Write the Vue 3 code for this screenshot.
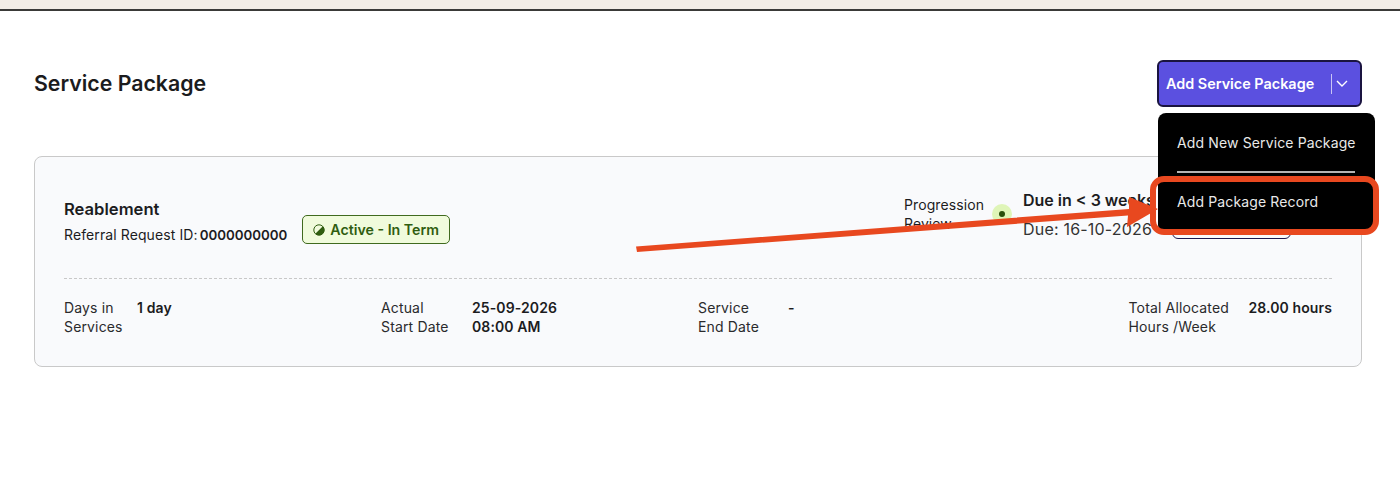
<template>
  <div class="page">
    <div class="topbar"></div>
    <main class="content">
      <header class="head">
        <h1 class="title">Service Package</h1>
        <div class="action">
          <button class="add" type="button">
            <span>Add Service Package</span>
            <span class="sep"></span>
            <svg class="chev" viewBox="0 0 12 7" width="12" height="7" fill="none" stroke="#fff" stroke-width="1.4"><path d="M1 1l5 5 5-5" /></svg>
          </button>
          <div class="menu">
            <div class="item first">Add New Service Package</div>
            <div class="rule"></div>
            <div class="item second">Add Package Record</div>
          </div>
        </div>
      </header>

      <section class="card">
        <div class="upper">
          <div class="id">
            <div class="idtext">
              <div class="name">Reablement</div>
              <div class="ref">Referral Request ID:<b>0000000000</b></div>
            </div>
            <span class="badge">
              <svg viewBox="0 0 12 12" width="12" height="12"><circle cx="6" cy="6" r="5.200" fill="none" stroke="#2f5d10" stroke-width="1" /><path d="M9.800 2.300A5.300 5.300 0 0 1 2.300 9.800z" fill="#2f5d10" /></svg>
              Active - In Term
            </span>
          </div>
          <div class="review">
            <div class="rlabel">Progression Review</div>
            <span class="halo"><i></i></span>
            <div class="due">
              <div class="dueb">Due in &lt; 3 weeks</div>
              <div class="dued">Due: 16-10-2026</div>
            </div>
            <div class="ghost"></div>
          </div>
        </div>
        <div class="facts">
          <div v-for="f in facts" :key="f.a" class="fact" :style="{ gridTemplateColumns: f.w + 'px auto' }">
            <div class="flabel">{{ f.a }}<br />{{ f.b }}</div>
            <div class="fval">{{ f.v }}<br v-if="f.v2" />{{ f.v2 }}</div>
          </div>
        </div>
      </section>
    </main>

    <svg class="arrow" width="1400" height="496" viewBox="0 0 1400 496">
      <path d="M636 246.500L1129 209L1129 197L1158 209L1127 227L1128 215.500L637 252z" fill="#e8481f" />
    </svg>
    <div class="frame"></div>
  </div>
</template>

<script setup>
const facts = [
  { a: 'Days in', b: 'Services', v: '1 day', v2: '', w: 73 },
  { a: 'Actual', b: 'Start Date', v: '25-09-2026', v2: '08:00 AM', w: 91 },
  { a: 'Service', b: 'End Date', v: '-', v2: '', w: 90 },
  { a: 'Total Allocated', b: 'Hours /Week', v: '28.00 hours', v2: '', w: 120 }
]
</script>

<style>
html, body { margin: 0; background: #fff; }
</style>

<style scoped>
.page {
  position: relative;
  width: 1400px;
  height: 496px;
  overflow: hidden;
  background: #fff;
  font-family: Inter, "Liberation Sans", sans-serif;
  color: #1c1c1e;
}
.topbar {
  height: 9px;
  background: #f2ede6;
  border-bottom: 2px solid #3a3a38;
}
.content { padding: 49px 38px 0 34px; }
.head {
  display: flex;
  justify-content: space-between;
  align-items: center;
  height: 47px;
  margin-bottom: 49px;
}
.title {
  margin: 0 0 2px;
  font-size: 21.300px;
  font-weight: 600;
  color: #1b1b1d;
}
.action { position: relative; }
.add {
  display: flex;
  align-items: center;
  box-sizing: border-box;
  width: 205px;
  height: 47px;
  padding: 0 12px 0 7px;
  background: #5b50e0;
  border: 2px solid #1a1440;
  border-radius: 6px;
  color: #fff;
  font: 600 14.400px Inter, "Liberation Sans", sans-serif;
}
.sep {
  width: 1px;
  height: 20px;
  margin: 0 3px 0 auto;
  background: #c9c5f5;
}
.chev { margin-left: 1px; }
.menu {
  position: absolute;
  top: 53px;
  left: 1px;
  box-sizing: border-box;
  width: 217px;
  height: 120px;
  padding: 0 20px 0 19px;
  background: #000;
  border-radius: 8px;
  color: #e9e9e9;
  font-size: 14px;
  letter-spacing: 0.130px;
  z-index: 2;
}
.item { line-height: 17px; white-space: nowrap; }
.first { padding-top: 21px; }
.rule { height: 2px; margin-top: 19.500px; background: #b4b4b4; }
.second { padding-top: 20px; }
.card {
  box-sizing: border-box;
  height: 211px;
  padding: 0 29px;
  background: #f9fafc;
  border: 1.300px solid #c9c9c9;
  border-radius: 8px;
}
.upper {
  display: flex;
  justify-content: space-between;
  height: 121px;
  border-bottom: 1px dashed #c8c8c8;
}
.id { display: flex; align-items: flex-start; padding-top: 42px; }
.name { font-size: 16.600px; font-weight: 600; line-height: 20px; }
.ref { margin-top: 7px; font-size: 14px; letter-spacing: 0.100px; line-height: 17px; white-space: nowrap; }
.ref b { margin-left: 2px; font-size: 13.300px; font-weight: 600; letter-spacing: 0; }
.badge {
  display: flex;
  align-items: center;
  gap: 5px;
  box-sizing: border-box;
  height: 29px;
  margin: 16px 0 0 15px;
  padding: 0 10px;
  background: #f0fbdc;
  border: 1px solid #406a1e;
  border-radius: 5px;
  color: #2f5d10;
  font-size: 14.200px;
  font-weight: 600;
  white-space: nowrap;
}
.review { display: flex; align-items: flex-start; padding-top: 33px; margin-right: 41px; }
.rlabel { width: 84px; font-size: 14px; letter-spacing: 0.100px; line-height: 19px; margin-top: 5px; }
.halo {
  display: flex;
  align-items: center;
  justify-content: center;
  width: 20px;
  height: 20px;
  margin: 14px 11px 0 4px;
  border-radius: 50%;
  background: #dff5b8;
}
.halo i { width: 6px; height: 6px; border-radius: 50%; background: #2a4f0c; }
.due { width: 149px; white-space: nowrap; }
.dueb { font-size: 16px; font-weight: 600; line-height: 20px; }
.dued { margin-top: 9px; font-size: 16px; letter-spacing: 0.200px; line-height: 20px; color: #333; }
.ghost {
  box-sizing: border-box;
  width: 119px;
  height: 48px;
  margin-top: 1px;
  border: 1.500px solid #1d1650;
  border-radius: 6px;
}
.facts {
  display: grid;
  grid-template-columns: repeat(4, 1fr);
  padding-top: 19px;
}
.fact { display: grid; align-items: start; font-size: 14px; line-height: 19px; }
.fact:last-child { justify-content: end; }
.flabel { color: #2a2a2c; letter-spacing: 0.150px; white-space: nowrap; }
.fval { font-weight: 600; letter-spacing: 0.100px; white-space: nowrap; }
.arrow { position: absolute; inset: 0; z-index: 3; pointer-events: none; }
.frame {
  position: absolute;
  left: 1150px;
  top: 176px;
  box-sizing: border-box;
  width: 229px;
  height: 59px;
  border: 6px solid #e8481f;
  border-radius: 14px;
  z-index: 4;
}
</style>
